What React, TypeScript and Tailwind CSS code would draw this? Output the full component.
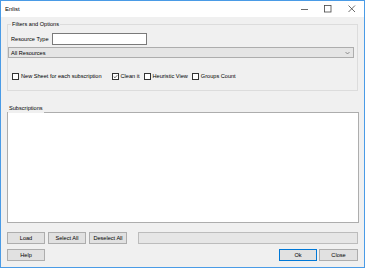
import React from "react";

function Check({ checked, label }: { checked?: boolean; label: string }) {
  return (
    <label className="flex items-center gap-[2px]">
      <span className="flex h-[7px] w-[7px] items-center justify-center border border-[#333333] bg-white">
        {checked && (
          <svg width="5" height="5" viewBox="0 0 10 10" fill="none" stroke="#333" strokeWidth="1.4">
            <path d="M1.5 5.2 L4 7.6 L8.6 2.4" />
          </svg>
        )}
      </span>
      <span>{label}</span>
    </label>
  );
}

function Btn({ children, primary, w = "w-[38px]" }: { children: React.ReactNode; primary?: boolean; w?: string }) {
  return (
    <button
      className={`flex h-[12px] ${w} items-center justify-center border bg-[#e1e1e1] text-black ${
        primary ? "border-[#0078d7]" : "border-[#adadad]"
      }`}
    >
      {children}
    </button>
  );
}

export default function App() {
  return (
    <div
      className="flex h-[268px] w-[365px] flex-col border border-[#4a9be6] bg-[#f0f0f0] text-[5.6px] leading-[8px] text-black"
      style={{ fontFamily: '"Liberation Sans", Arial, sans-serif' }}
    >
      {/* Title bar */}
      <div className="flex h-[16px] items-center bg-white pl-[4px]">
        <span className="text-[6px]">Enlist</span>
        <div className="ml-auto flex h-full items-center">
          <svg width="8" height="8" viewBox="0 0 8 8" className="mr-[15px]">
            <path d="M0 4.5 H7" stroke="#444" strokeWidth="0.8" />
          </svg>
          <svg width="8" height="8" viewBox="0 0 8 8" className="mr-[16px]">
            <rect x="0.5" y="0.5" width="6.5" height="6.5" fill="none" stroke="#444" strokeWidth="0.8" />
          </svg>
          <svg width="8" height="8" viewBox="0 0 8 8" className="mr-[8px]">
            <path d="M0.5 0.5 L7 7 M7 0.5 L0.5 7" stroke="#444" strokeWidth="0.8" />
          </svg>
        </div>
      </div>

      <div className="flex flex-col pl-[6px]">
        {/* Filters and Options */}
        <fieldset className="mt-[3px] w-[351px] border border-[#dcdcdc] px-0 pb-[10px]">
          <legend className="ml-[3px] px-[1px] leading-[8px]">Filters and Options</legend>
          <div className="mt-[5px] flex h-[12px] items-center pl-[3px]">
            <span className="w-[41px]">Resource Type</span>
            <div className="h-[12px] w-[95px] border border-[#7a7a7a] bg-white" />
          </div>
          <div className="mt-[2px] flex h-[11px] w-[346px] items-center justify-between border border-[#adadad] bg-[#e5e5e5] pl-[2px] pr-[3px]">
            <span>All Resources</span>
            <svg width="5" height="4" viewBox="0 0 10 6" fill="none" stroke="#555" strokeWidth="1.2">
              <path d="M1 1 L5 5 L9 1" />
            </svg>
          </div>
          <div className="mt-[14px] flex h-[8px] items-center gap-[4px] pl-[4px]">
            <Check label="New Sheet for each subscription" />
            <span className="w-[2px]" />
            <Check checked label="Clean it" />
            <Check label="Heuristic View" />
            <Check label="Groups Count" />
          </div>
        </fieldset>

        {/* Subscriptions */}
        <div className="relative mt-[21px] h-[111px] w-[352px] border border-[#adadad] bg-white">
          <span className="absolute -top-[10px] left-0 h-[10px] bg-[#f0f0f0] pl-[1px] pr-[1px] leading-[10px]">
            Subscriptions
          </span>
        </div>

        {/* Button rows */}
        <div className="mt-[9px] flex items-center gap-[3px]">
          <Btn>Load</Btn>
          <Btn>Select All</Btn>
          <Btn>Deselect All</Btn>
          <div className="ml-[8px] h-[12px] w-[220px] border border-[#bcbcbc] bg-[#e6e6e6]" />
        </div>
        <div className="mt-[5px] flex items-center">
          <Btn>Help</Btn>
          <div className="ml-auto mr-[6px] flex gap-[2px]">
            <Btn primary>Ok</Btn>
            <Btn w="w-[39px]">Close</Btn>
          </div>
        </div>
      </div>
    </div>
  );
}
